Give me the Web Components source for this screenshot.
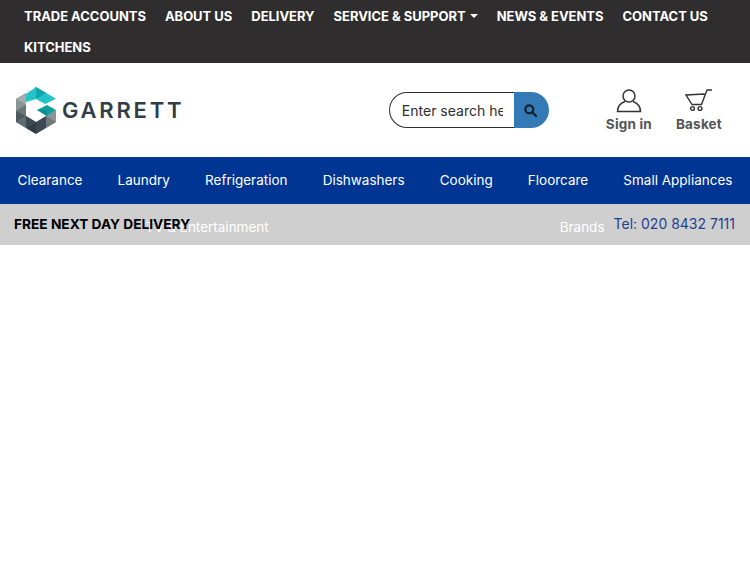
<!DOCTYPE html>
<html lang="en">
<head>
<meta charset="utf-8">
<title>Garrett</title>
<style>
  html, body { margin: 0; background: #fff; font-family: Inter, "Liberation Sans", sans-serif; }
</style>
</head>
<body>
<top-bar>
  <top-link>Trade Accounts</top-link>
  <top-link>About Us</top-link>
  <top-link>Delivery</top-link>
  <top-link caret>Service &amp; Support</top-link>
  <top-link>News &amp; Events</top-link>
  <top-link>Contact Us</top-link>
  <top-link>Kitchens</top-link>
</top-bar>
<site-header>
  <header-action label="Sign in" icon="user"></header-action>
  <header-action label="Basket" icon="cart"></header-action>
</site-header>
<main-nav>
  <nav-item>Clearance</nav-item>
  <nav-item>Laundry</nav-item>
  <nav-item>Refrigeration</nav-item>
  <nav-item>Dishwashers</nav-item>
  <nav-item>Cooking</nav-item>
  <nav-item>Floorcare</nav-item>
  <nav-item>Small Appliances</nav-item>
  <nav-item>TV &amp; Entertainment</nav-item>
  <nav-item>Brands</nav-item>
</main-nav>
<delivery-strip phone="Tel: 020 8432 7111">Free Next Day Delivery</delivery-strip>

<script>
const ICONS = {
  user: `<svg width="26" height="24" viewBox="0 0 26 24" fill="none" stroke="#333" stroke-width="1.5">
    <ellipse cx="13" cy="7" rx="6" ry="6"/>
    <path d="M9 12.500 C5 14 1.500 16.500 1.500 22.500 H24.500 C24.500 16.500 21 14 17 12.500"/>
  </svg>`,
  cart: `<svg width="28" height="24" viewBox="0 0 28 24" fill="none" stroke="#333" stroke-width="1.4">
    <path d="M27 1 H22 L16.500 15.500 H7 L1 6 L19.500 5"/>
    <circle cx="7.500" cy="19.500" r="1.900"/>
    <circle cx="15" cy="19.500" r="1.900"/>
  </svg>`,
};

class TopBar extends HTMLElement {
  constructor() {
    super();
    this.attachShadow({ mode: "open" });
    this.shadowRoot.innerHTML = `
      <style>
        :host {
          display: flex;
          flex-wrap: wrap;
          column-gap: 19px;
          box-sizing: border-box;
          height: 63px;
          padding: 0 24px;
          background: #2f2d2e;
        }
      </style>
      <slot></slot>`;
  }
}

class TopLink extends HTMLElement {
  constructor() {
    super();
    this.attachShadow({ mode: "open" });
    this.shadowRoot.innerHTML = `
      <style>
        :host {
          display: flex;
          align-items: center;
          height: 31px;
          color: #fff;
          font-size: 13px;
          font-weight: 700;
          letter-spacing: -0.03px;
          text-transform: uppercase;
          white-space: nowrap;
        }
        .caret {
          margin-left: 4px;
          border-top: 4px solid #fff;
          border-left: 4px solid transparent;
          border-right: 4px solid transparent;
        }
      </style>
      <slot></slot>${this.hasAttribute("caret") ? '<span class="caret"></span>' : ""}`;
  }
}

class SiteLogo extends HTMLElement {
  constructor() {
    super();
    this.attachShadow({ mode: "open" });
    this.shadowRoot.innerHTML = `
      <style>
        :host { display: flex; align-items: center; gap: 6px; }
        svg { display: block; }
        span {
          color: #2f3e48;
          font-size: 22px;
          font-weight: 600;
          letter-spacing: 2.750px;
        }
      </style>
      <svg width="40" height="47" viewBox="0 0 40 47">
        <polygon fill="#7d8789" points="0,12 10,6 10,29 20,35 20,47 0,35"/>
        <polygon fill="#a3abab" points="0,12 10,6 10,18"/>
        <polygon fill="#8b9495" points="0,12 10,18 0,24"/>
        <polygon fill="#6b7678" points="0,24 10,18 10,29"/>
        <polygon fill="#4d5a60" points="0,24 10,29 0,35"/>
        <polygon fill="#5f6b70" points="0,35 10,29 10,41"/>
        <polygon fill="#3c4952" points="10,29 20,35 10,41"/>
        <polygon fill="#2f3c46" points="10,41 20,35 20,47"/>
        <polygon fill="#3c4952" points="20,35 30,29 30,41 20,47"/>
        <polygon fill="#8d9697" points="30,29 40,23 40,35 30,41"/>
        <polygon fill="#6e797b" points="30,29 40,35 30,41"/>
        <polygon fill="#23c4c9" points="10,7 20,0 40,11.700 29,17 20,12 10,15"/>
        <polygon fill="#12a5a9" points="20,0 30,6 20,12"/>
        <polygon fill="#0fa0a0" points="21,23 31,18 40,23 31,29"/>
        <polygon fill="#0b8e90" points="21,23 31,23 31,29"/>
      </svg>
      <span>GARRETT</span>`;
  }
}

class SearchBox extends HTMLElement {
  constructor() {
    super();
    this.attachShadow({ mode: "open" });
    this.shadowRoot.innerHTML = `
      <style>
        :host { display: flex; width: 160px; height: 36px; }
        input {
          flex: 1;
          min-width: 0;
          box-sizing: border-box;
          padding: 0 11px 0 12px;
          border: 1px solid #2f2d2e;
          border-right: 0;
          border-radius: 18px 0 0 18px;
          outline: 0;
          background: #fff;
          font: 14px Inter, "Liberation Sans", sans-serif;
        }
        input::placeholder { color: #2f2d2e; opacity: 1; }
        button {
          display: flex;
          align-items: center;
          justify-content: center;
          width: 35px;
          padding: 0 2px 0 0;
          border: 0;
          border-radius: 0 18px 18px 0;
          background: #337ab7;
        }
      </style>
      <input type="text" placeholder="Enter search here">
      <button>
        <svg width="13" height="13" viewBox="0 0 13 13" fill="none" stroke="#16202b" stroke-width="2.200">
          <circle cx="5.300" cy="5.300" r="4"/>
          <path d="M8.200 8.200 L12 12" stroke-linecap="round"/>
        </svg>
      </button>`;
  }
}

class HeaderAction extends HTMLElement {
  constructor() {
    super();
    this.attachShadow({ mode: "open" });
    this.shadowRoot.innerHTML = `
      <style>
        :host {
          display: flex;
          flex-direction: column;
          align-items: center;
          gap: 3px;
          color: #555;
          font-size: 13.500px;
          font-weight: 700;
          letter-spacing: 0.2px;
        }
        svg { display: block; }
      </style>
      ${ICONS[this.getAttribute("icon")]}
      <span>${this.getAttribute("label")}</span>`;
  }
}

class SiteHeader extends HTMLElement {
  constructor() {
    super();
    this.attachShadow({ mode: "open" });
    this.shadowRoot.innerHTML = `
      <style>
        :host {
          display: flex;
          align-items: center;
          box-sizing: border-box;
          height: 94px;
          padding: 0 28px 0 16px;
        }
        search-box { margin-left: auto; margin-right: 57px; }
        .actions { display: flex; gap: 24px; }
      </style>
      <site-logo></site-logo>
      <search-box></search-box>
      <div class="actions"><slot></slot></div>`;
  }
}

class MainNav extends HTMLElement {
  constructor() {
    super();
    this.attachShadow({ mode: "open" });
    // only one row fits in the bar, the rest runs down over the strip below
    this.shadowRoot.innerHTML = `
      <style>
        :host {
          display: flex;
          flex-wrap: wrap;
          align-content: flex-start;
          justify-content: space-around;
          height: 47px;
          background: #003594;
        }
      </style>
      <slot></slot>`;
  }
}

class NavItem extends HTMLElement {
  constructor() {
    super();
    this.attachShadow({ mode: "open" });
    this.shadowRoot.innerHTML = `
      <style>
        :host {
          display: flex;
          align-items: center;
          box-sizing: border-box;
          height: 47px;
          padding: 0 17px 2px;
          color: #fff;
          font-size: 13.500px;
          white-space: nowrap;
        }
      </style>
      <slot></slot>`;
  }
}

class DeliveryStrip extends HTMLElement {
  constructor() {
    super();
    this.attachShadow({ mode: "open" });
    this.shadowRoot.innerHTML = `
      <style>
        :host {
          display: flex;
          align-items: center;
          justify-content: space-between;
          box-sizing: border-box;
          height: 41px;
          padding: 0 15px 2px 14px;
          background: #cfcfcf;
          font-size: 14px;
        }
        .free { color: #000; font-size: 13.700px; font-weight: 700; text-transform: uppercase; }
        .phone { color: #1f3f8f; }
      </style>
      <span class="free"><slot></slot></span>
      <span class="phone">${this.getAttribute("phone")}</span>`;
  }
}

customElements.define("top-link", TopLink);
customElements.define("top-bar", TopBar);
customElements.define("site-logo", SiteLogo);
customElements.define("search-box", SearchBox);
customElements.define("header-action", HeaderAction);
customElements.define("site-header", SiteHeader);
customElements.define("nav-item", NavItem);
customElements.define("main-nav", MainNav);
customElements.define("delivery-strip", DeliveryStrip);
</script>
</body>
</html>
